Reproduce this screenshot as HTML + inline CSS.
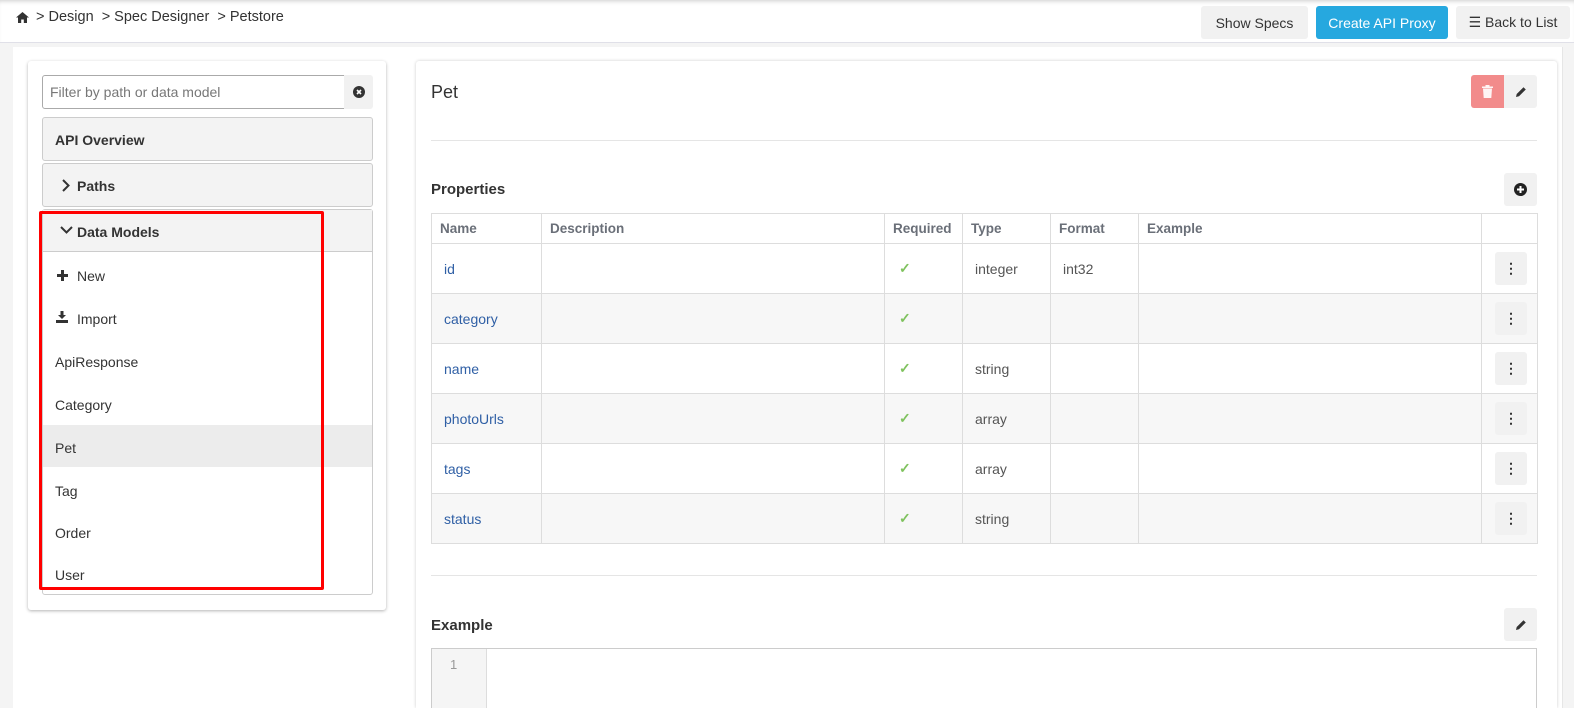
<!DOCTYPE html>
<html style="width:1574px;height:708px;overflow:hidden"><head><meta charset="utf-8"><style>
*{box-sizing:border-box;margin:0;padding:0}
body{width:1574px;height:708px;overflow:hidden;background:#f4f4f4;font-family:"Liberation Sans",sans-serif;font-size:14px;color:#333;position:relative}
.a{position:absolute}
.btn{position:absolute;border-radius:3px;background:#f1f1f1;display:flex;align-items:center;justify-content:center;font-size:14px;color:#333}
.tx{position:absolute;white-space:nowrap}
.box{position:absolute;background:#f3f3f3;border:1px solid #ccc;border-radius:3px}
td,th{border:1px solid #ddd;text-align:left;padding:0 8px;font-weight:normal}
th{color:#6a6f78;font-weight:bold;height:30px;font-size:13.5px}
td{height:50px;color:#555}
td.n{color:#2f5fa5;padding-left:12px}
tr.g td{background:#f7f7f7}
.dots{width:32px;height:33px;background:#f1f1f1;border-radius:3px;margin-left:5px;display:flex;align-items:center;justify-content:center;color:#333;font-weight:bold}
td:nth-child(3){color:#7fc25e;padding-left:14px;font-weight:bold}
</style></head><body>
<div class="a" style="left:0;top:0;width:1574px;height:43px;background:#fff;border-bottom:1px solid #e0e0e8;box-shadow:inset 0 4px 5px -3px #ccc"></div>
<svg class="a" style="left:16px;top:12px" width="13" height="11" viewBox="0 0 13 11"><path d="M6.5 0L0 5.5h2V11h3.2V7.5h2.6V11H11V5.5h2z" fill="#333"/></svg>
<div class="tx" style="left:36px;top:9px;font-size:14.5px">&gt; Design &nbsp;&gt; Spec Designer &nbsp;&gt; Petstore</div>
<div class="btn" style="left:1201px;top:6px;width:107px;height:33px">Show Specs</div>
<div class="btn" style="left:1316px;top:6px;width:132px;height:33px;background:#26a8df;color:#fff">Create API Proxy</div>
<div class="btn" style="left:1456px;top:6px;width:114px;height:33px">☰&nbsp;Back to List</div>

<div class="a" style="left:13px;top:47px;width:388px;height:661px;background:#fff"></div>
<div class="a" style="left:401px;top:47px;width:1162px;height:661px;background:#fff;border-right:1px solid #e6e6e6"></div>
<div class="a" style="left:28px;top:61px;width:358px;height:549px;background:#fff;border-radius:3px;box-shadow:0 1px 3px rgba(0,0,0,.3)"></div>
<div class="a" style="left:416px;top:61px;width:1141px;height:647px;background:#fff;border-radius:3px 3px 0 0;box-shadow:0 0 3px rgba(0,0,0,.2)"></div>

<div class="a" style="left:42px;top:75px;width:303px;height:34px;border:1px solid #aaa;border-radius:3px 0 0 3px"></div>
<div class="tx" style="left:50px;top:84px;color:#777">Filter by path or data model</div>
<div class="btn" style="left:344px;top:75px;width:29px;height:34px;border-radius:0 3px 3px 0"><svg width="12" height="12" viewBox="0 0 12 12"><circle cx="6" cy="6" r="6" fill="#333"/><path d="M4 4l4 4M8 4l-4 4" stroke="#fff" stroke-width="1.6"/></svg></div>
<div class="box" style="left:42px;top:117px;width:331px;height:44px"></div>
<div class="tx" style="left:55px;top:132px;font-weight:bold">API Overview</div>
<div class="box" style="left:42px;top:163px;width:331px;height:44px"></div>
<svg class="a" style="left:62px;top:179px" width="8" height="13" viewBox="0 0 8 13"><path d="M1 1l5.5 5.5L1 12" stroke="#333" stroke-width="2" fill="none"/></svg>
<div class="tx" style="left:77px;top:178px;font-weight:bold">Paths</div>
<div class="a" style="left:42px;top:209px;width:331px;height:386px;border:1px solid #ccc;border-radius:3px;background:#fff"></div>
<div class="a" style="left:43px;top:210px;width:329px;height:42px;background:#f3f3f3;border-bottom:1px solid #ccc"></div>
<svg class="a" style="left:60px;top:226px" width="13" height="9" viewBox="0 0 13 9"><path d="M1 1l5.5 5.5L12 1" stroke="#333" stroke-width="2" fill="none"/></svg>
<div class="tx" style="left:77px;top:224px;font-weight:bold">Data Models</div>
<div class="a" style="left:43px;top:425px;width:329px;height:42px;background:#ececec"></div>
<svg class="a" style="left:57px;top:270px" width="11" height="11" viewBox="0 0 11 11"><path d="M4 0h3v4h4v3H7v4H4V7H0V4h4z" fill="#333"/></svg>
<div class="tx" style="left:77px;top:268px">New</div>
<svg class="a" style="left:56px;top:311px" width="12" height="12" viewBox="0 0 12 12"><path d="M4.5 0h3v4h2.5L6 8 2 4h2.5z M0 9h12v3H0z" fill="#333"/></svg>
<div class="tx" style="left:77px;top:311px">Import</div>
<div class="tx" style="left:55px;top:354px">ApiResponse</div>
<div class="tx" style="left:55px;top:397px">Category</div>
<div class="tx" style="left:55px;top:440px">Pet</div>
<div class="tx" style="left:55px;top:483px">Tag</div>
<div class="tx" style="left:55px;top:525px">Order</div>
<div class="tx" style="left:55px;top:567px">User</div>
<div class="a" style="left:39px;top:211px;width:285px;height:379px;border:3px solid #f00;border-radius:2px"></div>

<div class="tx" style="left:431px;top:82px;font-size:18px">Pet</div>
<div class="btn" style="left:1471px;top:75px;width:33px;height:33px;background:#f28b8b;border-radius:3px 0 0 3px"><svg width="11" height="13" viewBox="0 0 11 13"><path d="M0 1.5h11v1.5H0zM3.5 0h4v1.5h-4zM1 3.5h9l-.7 9.5H1.7z" fill="#fff" opacity=".9"/></svg></div>
<div class="btn" style="left:1504px;top:75px;width:33px;height:33px;border-radius:0 3px 3px 0"><svg width="12" height="12" viewBox="0 0 12 12"><path d="M1 11l.7-3L8.5 1.2l2.3 2.3L4 10.3z" fill="#333"/></svg></div>
<div class="a" style="left:431px;top:140px;width:1106px;height:1px;background:#e5e5e5"></div>
<div class="tx" style="left:431px;top:181px;font-size:15px;font-weight:bold">Properties</div>
<div class="btn" style="left:1504px;top:173px;width:33px;height:33px"><svg width="13" height="13" viewBox="0 0 13 13"><circle cx="6.5" cy="6.5" r="6.5" fill="#222"/><path d="M6.5 3v7M3 6.5h7" stroke="#fff" stroke-width="2"/></svg></div>
<table class="a" style="left:431px;top:213px;width:1107px;border-collapse:collapse">
<tr><th style="width:110px">Name</th><th style="width:343px">Description</th><th style="width:78px">Required</th><th style="width:88px">Type</th><th style="width:88px">Format</th><th style="width:343px">Example</th><th></th></tr>
<tr><td class="n">id</td><td></td><td>✓</td><td style="padding-left:12px">integer</td><td style="padding-left:12px">int32</td><td></td><td><div class="dots">⋮</div></td></tr>
<tr class="g"><td class="n">category</td><td></td><td>✓</td><td></td><td></td><td></td><td><div class="dots">⋮</div></td></tr>
<tr><td class="n">name</td><td></td><td>✓</td><td style="padding-left:12px">string</td><td></td><td></td><td><div class="dots">⋮</div></td></tr>
<tr class="g"><td class="n">photoUrls</td><td></td><td>✓</td><td style="padding-left:12px">array</td><td></td><td></td><td><div class="dots">⋮</div></td></tr>
<tr><td class="n">tags</td><td></td><td>✓</td><td style="padding-left:12px">array</td><td></td><td></td><td><div class="dots">⋮</div></td></tr>
<tr class="g"><td class="n">status</td><td></td><td>✓</td><td style="padding-left:12px">string</td><td></td><td></td><td><div class="dots">⋮</div></td></tr>
</table>
<div class="a" style="left:431px;top:575px;width:1106px;height:1px;background:#e5e5e5"></div>
<div class="tx" style="left:431px;top:617px;font-size:15px;font-weight:bold">Example</div>
<div class="btn" style="left:1504px;top:608px;width:33px;height:33px"><svg width="12" height="12" viewBox="0 0 12 12"><path d="M1 11l.7-3L8.5 1.2l2.3 2.3L4 10.3z" fill="#333"/></svg></div>
<div class="a" style="left:431px;top:648px;width:1106px;height:60px;border:1px solid #ccc;border-bottom:none;background:#fff"></div>
<div class="a" style="left:432px;top:649px;width:55px;height:59px;background:#f5f5f5;border-right:1px solid #ddd"></div>
<div class="tx" style="left:450px;top:657px;color:#999;font-size:13px">1</div>
</body></html>
